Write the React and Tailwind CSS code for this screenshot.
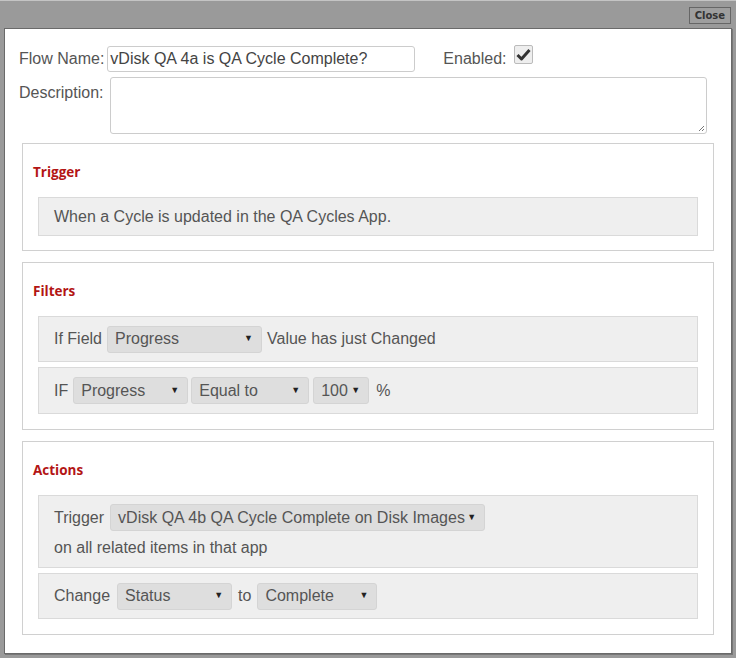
import React from 'react';

const Select = ({ value, width, height = 'h-[27px]' }) => (
    <div className={`${width} ${height} flex items-center justify-between rounded-[3px] border border-[#d4d4d4] bg-[#dedede] pl-[7px] pr-[8px] text-[#555]`}>
        <span>{value}</span>
        <span className="text-[9px] text-[#222]">▼</span>
    </div>
);

const Section = ({ title, children, pb = 'pb-[15px]' }) => (
    <div className={`border border-[#d0d0d0] px-[15px] ${pb}`}>
        <div className="h-[53px] pt-[19px] text-[13.5px] leading-[18px] font-bold text-[#b31515] -ml-[5px]" style={{ fontFamily: '"Open Sans", sans-serif' }}>
            {title}
        </div>
        <div className="flex flex-col gap-[5px]">{children}</div>
    </div>
);

const Row = ({ children, className = '' }) => (
    <div className={`border border-[#dadada] bg-[#efefef] px-[15px] ${className}`}>{children}</div>
);

export default function App() {
    return (
        <div
            className="w-[736px] h-[658px] bg-[#9a9a9a] border-t border-[#c4c4c4] flex flex-col text-[16px] text-[#555]"
            style={{ fontFamily: '"Liberation Sans", Arial, sans-serif' }}
        >
            {/* Title bar */}
            <div className="h-[27px] flex items-start justify-end pr-[5px] pt-[6px]">
                <button
                    className="h-[17px] px-[5px] border border-[#666] bg-[#9e9e9e] text-[10px] font-bold leading-[15px] text-[#333]"
                    style={{ fontFamily: '"DejaVu Sans", sans-serif' }}
                >
                    Close
                </button>
            </div>

            {/* Dialog body */}
            <div className="mx-[4px] h-[626px] border border-[#6a6a6a] bg-white shadow-[1px_1px_0_#777]">
                <div className="pt-[17px] pl-[14px] flex items-center">
                    <span>Flow Name:</span>
                    <div className="ml-[3px] w-[308px] h-[26px] rounded-[3px] border border-[#ccc] px-[2px] flex items-center text-[#444]">
                        vDisk QA 4a is QA Cycle Complete?
                    </div>
                    <span className="ml-[28px]">Enabled:</span>
                    <div className="ml-[7px] -mt-[9px] w-[19px] h-[19px] rounded-[2px] border border-[#bbb] bg-[#eee] flex items-center justify-center">
                        <svg width="15" height="13" viewBox="0 0 15 13">
                            <path d="M1.5 7 L5.5 11 L13.5 2" fill="none" stroke="#333" strokeWidth="3" strokeLinejoin="round" />
                        </svg>
                    </div>
                </div>

                <div className="mt-[5px] pl-[14px] flex items-start">
                    <span className="pt-[4px]">Description:</span>
                    <div className="ml-[7px] w-[597px] h-[57px] rounded-[3px] border border-[#ccc] relative">
                        <svg className="absolute right-[1px] bottom-[1px]" width="7" height="7" viewBox="0 0 7 7">
                            <path d="M6 1 L1 6 M6 4 L4 6" stroke="#777" strokeWidth="1" />
                        </svg>
                    </div>
                </div>

                <div className="mx-[17px] mt-[9px] flex flex-col gap-[11px]">
                    <Section title="Trigger" pb="pb-[14px]">
                        <Row className="py-[9px] leading-[19px]">When a Cycle is updated in the QA Cycles App.</Row>
                    </Section>

                    <Section title="Filters">
                        <Row className="flex items-center gap-[5px] h-[46px]">
                            <span>If Field</span>
                            <Select value="Progress" width="w-[155px]" />
                            <span>Value has just Changed</span>
                        </Row>
                        <Row className="flex items-center h-[47px]">
                            <span className="mr-[5px]">IF</span>
                            <Select value="Progress" width="w-[115px]" />
                            <div className="w-[3px]" />
                            <Select value="Equal to" width="w-[118px]" />
                            <div className="w-[4px]" />
                            <Select value="100" width="w-[56px]" />
                            <span className="ml-[7px]">%</span>
                        </Row>
                    </Section>

                    <Section title="Actions">
                        <Row className="pt-[8px] pb-[6px] h-[73px]">
                            <div className="flex items-center gap-[6px]">
                                <span>Trigger</span>
                                <Select value="vDisk QA 4b QA Cycle Complete on Disk Images" width="w-[375px]" height="h-[27px]" />
                            </div>
                            <div className="mt-[5px] leading-[24px]">on all related items in that app</div>
                        </Row>
                        <Row className="flex items-center h-[46px]">
                            <span>Change</span>
                            <div className="w-[7px]" />
                            <Select value="Status" width="w-[115px]" />
                            <span className="ml-[6px] mr-[6px]">to</span>
                            <Select value="Complete" width="w-[120px]" />
                        </Row>
                    </Section>
                </div>
            </div>
        </div>
    );
}
